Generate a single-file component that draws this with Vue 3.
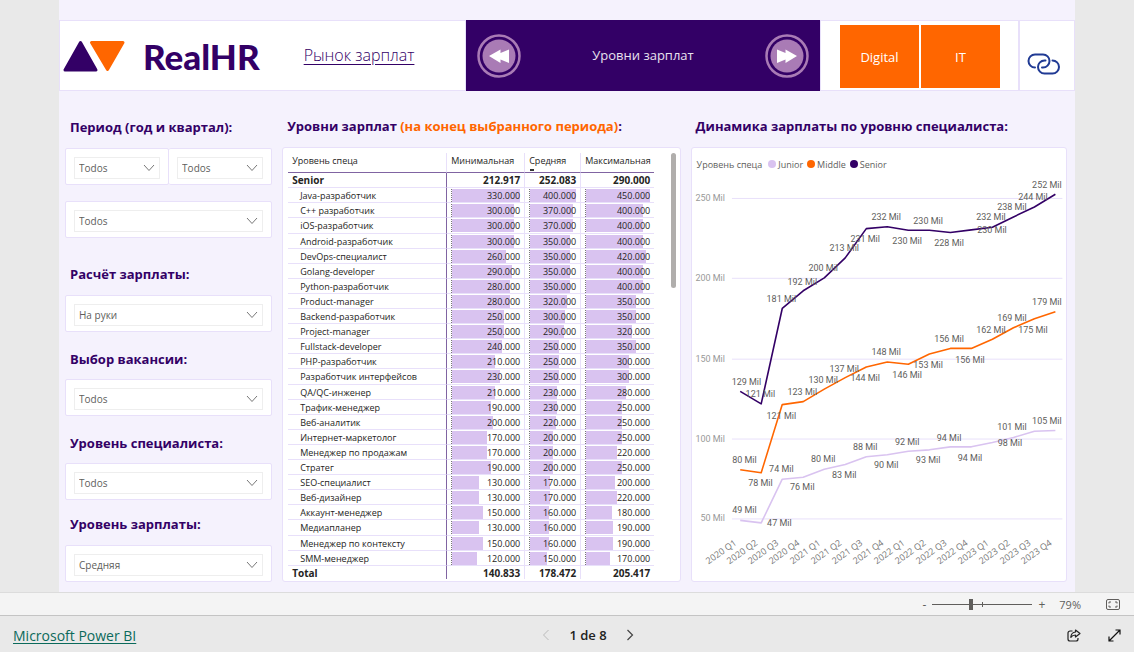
<script setup>
import { ref } from 'vue'

const filters = ref([
  { id: 'year', label: 'Период (год и квартал):', size: 'first', boxes: [{ id: 'year', value: 'Todos' }, { id: 'quarter', value: 'Todos' }] },
  { id: 'month', label: '', size: 'none', boxes: [{ id: 'month', value: 'Todos' }] },
  { id: 'calc', label: 'Расчёт зарплаты:', size: 'tall', boxes: [{ id: 'calc', value: 'На руки' }] },
  { id: 'job', label: 'Выбор вакансии:', size: '', boxes: [{ id: 'job', value: 'Todos' }] },
  { id: 'level', label: 'Уровень специалиста:', size: '', boxes: [{ id: 'level', value: 'Todos' }] },
  { id: 'pay', label: 'Уровень зарплаты:', size: 'short', boxes: [{ id: 'pay', value: 'Средняя' }] },
])

const rows = [
  ['Java-разработчик', 330, 400, 450],
  ['C++ разработчик', 300, 370, 400],
  ['iOS-разработчик', 300, 370, 400],
  ['Android-разработчик', 300, 350, 400],
  ['DevOps-специалист', 260, 350, 420],
  ['Golang-developer', 290, 350, 400],
  ['Python-разработчик', 280, 350, 400],
  ['Product-manager', 280, 320, 350],
  ['Backend-разработчик', 250, 300, 350],
  ['Project-manager', 250, 290, 320],
  ['Fullstack-developer', 240, 250, 350],
  ['PHP-разработчик', 210, 250, 300],
  ['Разработчик интерфейсов', 230, 250, 300],
  ['QA/QC-инженер', 210, 230, 280],
  ['Трафик-менеджер', 190, 230, 250],
  ['Веб-аналитик', 200, 220, 250],
  ['Интернет-маркетолог', 170, 200, 250],
  ['Менеджер по продажам', 170, 200, 220],
  ['Стратег', 190, 200, 250],
  ['SEO-специалист', 130, 170, 200],
  ['Веб-дизайнер', 130, 170, 220],
  ['Аккаунт-менеджер', 150, 160, 180],
  ['Медиапланер', 130, 160, 190],
  ['Менеджер по контексту', 150, 160, 190],
  ['SMM-менеджер', 120, 150, 170],
]
const maxima = [330, 400, 450]

const px = (i) => 740.3 + i * 21.05
const line = (ys) => ys.map((y, i) => `${px(i).toFixed(1)},${y}`).join(' ')

const series = [
  { name: 'Junior', color: '#d9c3f0', ys: [521, 523.5, 479.7, 477.7, 469.7, 465, 457.3, 455.3, 451.7, 450.3, 447.3, 447.3, 443, 438, 431.7, 431] },
  { name: 'Middle', color: '#ff6600', ys: [470.3, 473.3, 405, 402, 389.5, 378, 367.3, 362.3, 364.5, 354.3, 348.7, 348.7, 339.5, 328, 319, 312] },
  { name: 'Senior', color: '#330066', ys: [391.7, 404.3, 308.7, 291, 278, 258, 228.7, 226.8, 230.3, 230.3, 232.6, 230, 227.3, 217, 207, 194.3] },
]

const grid = [[250, 198], [200, 278], [150, 359], [100, 439], [50, 519]]

const points = [
  [129, 746, 382], [121, 760, 394], [181, 781, 299], [192, 802, 282], [200, 823, 268], [213, 844, 248],
  [231, 865, 239], [232, 886, 217], [230, 907, 241], [230, 928, 221], [228, 949, 243], [230, 992, 230],
  [232, 991, 217], [238, 1012, 207], [244, 1033, 197], [252, 1047, 185],
  [80, 744, 461], [78, 760, 484], [121, 781, 416], [123, 802, 392], [130, 823, 380], [137, 844, 369],
  [144, 865, 378], [148, 886, 352], [146, 907, 375], [153, 928, 365], [156, 949, 339], [156, 970, 360],
  [162, 991, 330], [169, 1012, 318], [175, 1033, 330], [179, 1047, 302],
  [49, 744, 511], [47, 779, 524], [74, 781, 470], [76, 802, 488], [80, 823, 460], [83, 844, 476],
  [88, 865, 447], [90, 886, 466], [92, 907, 442], [93, 928, 461], [94, 949, 438], [94, 970, 458],
  [98, 1010, 443], [101, 1012, 427], [105, 1047, 421],
]

const quarters = [2020, 2021, 2022, 2023].flatMap((y) => [1, 2, 3, 4].map((q) => `${y} Q${q}`))
const zoom = ref(38)
</script>

<template>
  <div class="app">
    <main class="report">
      <header class="top">
        <div class="brand">
          <svg class="mark" width="63" height="34" viewBox="0 0 63 34" aria-hidden="true">
            <g stroke-width="3" stroke-linejoin="round">
              <path d="M18.500 3.500 34 31H3z" fill="#330066" stroke="#330066" />
              <path d="M29.500 3.500H61L45.500 30.500z" fill="#ff6600" stroke="#ff6600" />
            </g>
          </svg>
          <span class="name">RealHR</span>
          <a class="market" href="#">Рынок зарплат</a>
        </div>
        <nav class="pager">
          <button class="round" aria-label="Назад">
            <svg width="44" height="44" viewBox="0 0 44 44">
              <circle cx="22" cy="22" r="20.500" fill="none" stroke="#a97bb5" stroke-width="2.500" />
              <circle cx="22" cy="22" r="16.500" fill="#a97bb5" />
              <path d="M12 22 23.500 15.500V19L32 15.500V29L23.500 25.500V29z" fill="#fff" />
            </svg>
          </button>
          <span>Уровни зарплат</span>
          <button class="round" aria-label="Вперёд">
            <svg width="44" height="44" viewBox="0 0 44 44">
              <circle cx="22" cy="22" r="20.500" fill="none" stroke="#a97bb5" stroke-width="2.500" />
              <circle cx="22" cy="22" r="16.500" fill="#a97bb5" />
              <path d="M32 22 20.500 15.500V19L12 15.500V29L20.500 25.500V29z" fill="#fff" />
            </svg>
          </button>
        </nav>
        <div class="areas">
          <button>Digital</button>
          <button>IT</button>
        </div>
        <a class="share" href="#" aria-label="Ссылка">
          <svg width="34" height="22" viewBox="0 0 34 22" fill="none" stroke="#203a94" stroke-width="2" stroke-linecap="round">
            <path d="M8 14.500A6.300 6.300 0 0 1 8 1.500H16A6.300 6.300 0 0 1 16 14.500H15" />
            <path d="M25.500 7.500A6.300 6.300 0 0 1 25.500 20.500H17.500A6.300 6.300 0 0 1 17.500 7.500H18.500" />
          </svg>
        </a>
      </header>

      <div class="columns">
        <form class="filters">
          <section v-for="f in filters" :key="f.id">
            <label v-if="f.label" class="title" :class="f.size" :for="f.boxes[0].id">{{ f.label }}</label>
            <div class="row" :class="f.size">
              <div v-for="b in f.boxes" :key="b.id" class="box">
                <div class="field">
                  <select :id="b.id" v-model="b.value" :aria-label="f.label || 'Месяц'">
                    <option>{{ b.value }}</option>
                  </select>
                  <svg width="12" height="8" viewBox="0 0 12 8" fill="none" stroke="#777" stroke-width="1"><path d="M1 1l5 5.500 5-5.500" /></svg>
                </div>
              </div>
            </div>
          </section>
        </form>

        <section class="panel">
          <h2 class="title first">Уровни зарплат <em>(на конец выбранного периода)</em>:</h2>
          <div class="card tablecard">
            <table>
              <thead>
                <tr>
                  <th class="c0">Уровень спеца</th>
                  <th class="c1">Минимальная</th>
                  <th class="c2 sorted">Средняя</th>
                  <th class="c3">Максимальная</th>
                </tr>
              </thead>
              <tbody>
                <tr class="sum"><td>Senior</td><td>212.917</td><td>252.083</td><td>290.000</td></tr>
                <tr v-for="r in rows" :key="r[0]">
                  <td class="job">{{ r[0] }}</td>
                  <td v-for="n in 3" :key="n">
                    <div class="cell">
                      <i :style="{ width: (r[n] / maxima[n - 1]) * 100 + '%' }"></i>
                      <span>{{ r[n] }}.000</span>
                    </div>
                  </td>
                </tr>
                <tr class="sum total"><td>Total</td><td>140.833</td><td>178.472</td><td>205.417</td></tr>
              </tbody>
            </table>
            <div class="thumb"></div>
          </div>
        </section>

        <section class="panel">
          <h2 class="title first">Динамика зарплаты по уровню специалиста:</h2>
          <div class="card chartcard">
            <div class="legend">
              <span class="caption">Уровень спеца</span>
              <span v-for="s in series" :key="s.name" class="key">
                <svg width="8" height="8" viewBox="0 0 8 8"><circle cx="4" cy="4" r="4" :fill="s.color" /></svg>{{ s.name }}
              </span>
            </div>
            <svg class="chart" viewBox="692 174 375 406">
              <g v-for="g in grid" :key="g[0]">
                <line x1="732" x2="1063" :y1="g[1] + 0.5" :y2="g[1] + 0.5" stroke="#e8e0fa" />
                <text class="axis" x="725" :y="g[1] + 3" text-anchor="end">{{ g[0] }} Mil</text>
              </g>
              <polyline v-for="s in series" :key="s.name" :points="line(s.ys)" fill="none" :stroke="s.color" stroke-width="1.600" stroke-linejoin="round" />
              <text v-for="(p, i) in points" :key="i" class="mark-text" :x="p[1] + 0.5" :y="p[2] + 3" text-anchor="middle">{{ p[0] }} Mil</text>
              <text v-for="(q, i) in quarters" :key="q" class="quarter" text-anchor="end" :transform="`translate(${px(i) - 3} 545) rotate(-35)`">{{ q }}</text>
            </svg>
          </div>
        </section>
      </div>
    </main>

    <div class="status">
      <button aria-label="Уменьшить">-</button>
      <div class="slider"><input v-model="zoom" type="range" min="0" max="100" aria-label="Масштаб" /></div>
      <button aria-label="Увеличить">+</button>
      <span class="percent">79%</span>
      <button class="fit" aria-label="По размеру страницы">
        <svg width="14" height="11" viewBox="0 0 14 11" fill="none" stroke="#605e5c">
          <rect x=".5" y=".5" width="13" height="10" rx="1.500" />
          <path d="M3 4.500V3H5M9 3h2v1.500M11 6.500V8H9M5 8H3V6.500" />
        </svg>
      </button>
    </div>

    <footer class="foot">
      <a href="#">Microsoft Power BI</a>
      <div class="pages">
        <button aria-label="Предыдущая страница"><svg width="8" height="12" viewBox="0 0 8 12" fill="none" stroke="#bbb"><path d="M6.500 1 1.500 6l5 5" /></svg></button>
        <span>1 de 8</span>
        <button aria-label="Следующая страница"><svg width="8" height="12" viewBox="0 0 8 12" fill="none" stroke="#444" stroke-width="1.200"><path d="M1.500 1l5 5-5 5" /></svg></button>
      </div>
      <div class="actions">
        <button aria-label="Поделиться">
          <svg width="14" height="13" viewBox="0 0 14 13" fill="none" stroke="#222" stroke-width="1.200" stroke-linejoin="round">
            <path d="M5.500 2H3A2 2 0 0 0 1 4v6a2 2 0 0 0 2 2h6a2 2 0 0 0 2-2V9" />
            <path d="M8.500 1 13 4.500 8.500 8V6C6.500 6 5 6.500 3.800 8.300 4 5.500 5.500 3.200 8.500 3z" />
          </svg>
        </button>
        <button aria-label="Во весь экран">
          <svg width="13" height="13" viewBox="0 0 13 13" fill="none" stroke="#111" stroke-width="1.200"><path d="M1 12 12 1M7.500 1H12v4.500M1 7.500V12h4.500" /></svg>
        </button>
      </div>
    </footer>
  </div>
</template>

<style>
body { background: #e9e9e9; }
</style>

<style scoped>
* { box-sizing: border-box; }
.app { font-family: "Open Sans", "Noto Sans", sans-serif; color: #252423; }
button { border: 0; padding: 0; background: none; font: inherit; color: inherit; display: flex; align-items: center; justify-content: center; }
.report { margin: 0 59px; padding-top: 20px; padding-bottom: 10px; background: #f5f2fd; }
.top { display: grid; grid-template-columns: 407fr 354fr 199fr 56fr; height: 71px; }
.top > * { border: 1px solid #e8e0fa; background: #fff; }
.brand { display: flex; align-items: center; padding-left: 2px; }
.name { margin-left: 18px; font: 900 35px/40px Lato, "Open Sans", sans-serif; color: #330066; }
.market { margin-left: 44px; padding-bottom: 2px; font-size: 16px; font-weight: 300; color: #330066; text-underline-offset: 3px; }
.top .pager { display: flex; align-items: center; justify-content: space-between; padding: 0 10px; background: #330066; border-color: #330066; color: #e8e2ee; font-size: 13px; }
.pager span { padding-bottom: 2px; }
.areas { display: flex; gap: 2px; padding: 4px 18px 2px 19px; }
.areas button { flex: 1; background: #ff6600; color: #fff; font-size: 13px; }
.share { display: flex; align-items: center; justify-content: center; padding: 16px 6px 0 0; }
.columns { display: grid; grid-template-columns: 207fr 398fr 376fr; column-gap: 10px; padding: 0 8px 0 6px; }
.title { display: block; margin: 0; padding: 17px 5px 0; height: 47px; font-size: 13px; line-height: 20px; font-weight: 700; color: #330066; white-space: nowrap; }
.title.first { height: 57px; padding-top: 26px; }
.title.tall { height: 57px; padding-top: 26px; }
.title.short { height: 45px; padding-top: 14px; }
.title em { font-style: normal; color: #ff6600; }
.row { display: flex; }
.row.none { margin-top: 16px; }
.box { flex: 1; height: 37px; padding: 8px; background: #fff; border: 1px solid #e8e0fa; border-radius: 2px; }
.box + .box { border-left: 0; }
.field { display: flex; align-items: center; height: 22px; border: 1px solid #eee; padding-right: 4px; }
select { flex: 1; min-width: 0; appearance: none; border: 0; background: none; padding: 0 4px; font: 10px "Open Sans", "Noto Sans", sans-serif; color: #605e5c; }
.panel { display: flex; flex-direction: column; }
.card { flex: 1; background: #fff; border: 1px solid #e8e0fa; border-radius: 3px; }
.tablecard { display: flex; align-items: flex-start; justify-content: space-between; padding: 5px 4px 2px 5px; }
.panel .title.first { height: 56px; padding-top: 25px; }
table { width: 366px; border-collapse: separate; border-spacing: 0; table-layout: fixed; font-size: 9px; line-height: 12px; }
th { height: 20px; padding: 0 4px 4px; text-align: left; font-weight: 400; font-size: 9px; white-space: nowrap; border-bottom: 1px solid #8064a2; border-right: 1px solid #e8e0fa; }
th:last-child, td:last-child { border-right: 0; }
.c0 { width: 159px; }
.c1 { width: 78px; }
.c2 { width: 56px; }
.sorted { background: linear-gradient(#333, #333) 5px 16px / 4px 2px no-repeat; }
td { height: 15px; padding: 0 4px; border-bottom: 1px solid #e8e0fa; border-right: 1px solid #e8e0fa; text-align: right; white-space: nowrap; }
tbody tr:nth-child(10n + 4) td { height: 16px; }
td:first-child { text-align: left; border-right-color: #8064a2; }
td.job { padding-left: 12px; padding-top: 1px; }
.sum td { font-weight: 700; font-size: 10px; }
.sum.total td { height: 13px; border-bottom: 0; }
.cell { display: grid; align-items: center; border-left: 1px dotted #777; }
.cell > * { grid-area: 1 / 1; }
.cell i { height: 13px; background: #d9c3f0; }
.cell span { padding-top: 1px; }
.thumb { width: 5px; height: 135px; border-radius: 3px; background: #b0aeac; }
.chartcard { display: flex; flex-direction: column; }
.legend { display: flex; align-items: center; gap: 4px; height: 26px; padding: 6px 5px 0; font-size: 9px; color: #605e5c; }
.caption { margin-right: 2px; }
.key { display: flex; align-items: center; gap: 2px; }
.chart { display: block; width: 100%; }
.axis, .mark-text { font-family: Roboto, sans-serif; font-size: 9px; fill: #605e5c; }
.axis { fill: #999; }
.quarter { font-size: 9px; fill: #777; }
.status { display: flex; align-items: center; justify-content: flex-end; height: 24px; padding-right: 14px; background: #f4f4f4; border-top: 1px solid #dcdcdc; border-bottom: 1px solid #c4c4c4; color: #605e5c; font-size: 12px; }
.slider { width: 100px; margin: 0 6px; height: 12px; display: flex; background: linear-gradient(#605e5c, #605e5c) 50px 4px / 1px 5px no-repeat, linear-gradient(#605e5c, #605e5c) 0 6px / 100% 1px no-repeat; }
input { appearance: none; width: 100%; margin: 0; background: none; }
input::-webkit-slider-thumb { appearance: none; width: 4px; height: 11px; background: #605e5c; }
.percent { margin: 0 25px 0 14px; font-size: 11px; }
.foot { display: grid; grid-template-columns: 1fr auto 1fr; align-items: center; height: 36px; padding: 2px 13px 0; }
.foot a { color: #0b6a5b; font-size: 14px; text-underline-offset: 2px; }
.pages { display: flex; align-items: center; gap: 19px; margin-right: -42px; font-size: 13px; font-weight: 600; color: #222; }
.actions { display: flex; justify-content: flex-end; gap: 27px; }
</style>
